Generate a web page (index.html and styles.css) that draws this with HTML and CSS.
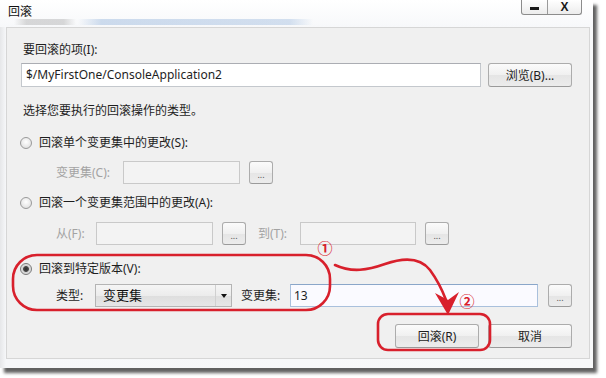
FILE: index.html
```html
<!DOCTYPE html>
<html lang="zh-CN">
<head>
<meta charset="utf-8">
<title>回滚</title>
<link rel="stylesheet" href="styles.css">
</head>
<body>
<div class="shot">
  <div class="titlebar">
    <span class="title">回滚</span>
    <div class="caption">
      <span class="cap cap-min"><i></i></span>
      <span class="cap cap-close">X</span>
    </div>
  </div>
  <div class="panel">
    <div class="lbl">要回滚的项(I):</div>
    <div class="row path-row">
      <div class="tb tb-path">$/MyFirstOne/ConsoleApplication2</div>
      <div class="btn btn-browse">浏览(B)...</div>
    </div>
    <div class="lbl lbl-type">选择您要执行的回滚操作的类型。</div>

    <div class="radio-row rr1"><span class="radio"></span><span>回滚单个变更集中的更改(S):</span></div>
    <div class="sub sub1">
      <span class="sublbl dis w-c">变更集(C):</span>
      <div class="tb tb-dis w-117"></div>
      <div class="btn dots">...</div>
    </div>

    <div class="radio-row rr2"><span class="radio"></span><span>回滚一个变更集范围中的更改(A):</span></div>
    <div class="sub sub2">
      <span class="sublbl dis w-f">从(F):</span>
      <div class="tb tb-dis w-117"></div>
      <div class="btn dots">...</div>
      <span class="sublbl dis w-t">到(T):</span>
      <div class="tb tb-dis w-116"></div>
      <div class="btn dots">...</div>
    </div>

    <div class="radio-row rr3"><span class="radio checked"></span><span>回滚到特定版本(V):</span></div>
    <div class="sub sub3">
      <span class="sublbl w-type">类型:</span>
      <div class="combo"><span class="combo-text">变更集</span><span class="combo-arrow"></span></div>
      <span class="sublbl w-cs">变更集:</span>
      <div class="tb tb-focus w-248">13</div>
      <div class="btn dots">...</div>
    </div>

    <div class="actions">
      <div class="btn btn-act">回滚(R)</div>
      <div class="btn btn-act">取消</div>
    </div>
  </div>

  <svg class="marks" width="606" height="378" viewBox="0 0 606 378">
    <rect x="13" y="255" width="317" height="55" rx="24" ry="24" class="mk"/>
    <rect x="378" y="314" width="112" height="36" rx="10" ry="10" class="mk"/>
    <path d="M335,265 C352,273 368,270 385,264 C402,258 420,257 430,270 C438,281 443,292 446,300" class="mk"/>
    <polygon points="435,293 448,300 459,292 448,315" class="mk-fill"/>
    <text x="325" y="254" class="mk-text">①</text>
    <text x="467" y="307" class="mk-text">②</text>
  </svg>
</div>
</body>
</html>
```

FILE: styles.css
```css
html, body {
  margin: 0;
  padding: 0;
  background: #ffffff;
}

body {
  width: 606px;
  height: 378px;
  overflow: hidden;
  font-family: "Noto Sans", "Noto Sans CJK SC", sans-serif;
  font-size: 12px;
  color: #1e1e1e;
}

.shot {
  position: relative;
  width: 593px;
  height: 368px;
  background: linear-gradient(90deg, #e6e7e9 0, #f6f7f9 6px, #f8f9fa 100%);
  box-shadow: 4px 5px 3px rgba(0, 0, 0, 0.62);
}

.titlebar {
  height: 27px;
  box-sizing: border-box;
  display: flex;
  justify-content: space-between;
  align-items: flex-start;
  padding: 0 11px 0 8px;
  background:
    linear-gradient(90deg, rgba(150,150,150,0) 0, rgba(150,150,150,.35) 20%, rgba(150,150,150,.35) 80%, rgba(150,150,150,0) 100%) no-repeat 14px 19px / 62px 6px,
    linear-gradient(90deg, rgba(120,160,210,0) 0, rgba(120,160,210,.35) 10%, rgba(120,160,210,.3) 90%, rgba(120,160,210,0) 100%) no-repeat 78px 19px / 235px 6px,
    linear-gradient(#ffffff, #f7f8fa);
}

.title {
  line-height: 16px;
  margin-top: 4px;
  color: #111;
}

.caption {
  display: flex;
  height: 15px;
  box-sizing: border-box;
  border: 1px solid #8c8c8c;
  border-top: none;
  border-radius: 0 0 3px 3px;
  background: linear-gradient(#ffffff, #ececec);
}

.cap {
  display: flex;
  align-items: center;
  justify-content: center;
  height: 14px;
}

.cap-min {
  width: 25px;
  border-right: 1px solid #9a9a9a;
}

.cap-min i {
  display: block;
  width: 9px;
  height: 3px;
  margin-top: 2px;
  background: #1a1a1a;
}

.cap-close {
  width: 33px;
  font-family: "Liberation Sans", sans-serif;
  font-weight: bold;
  font-size: 12px;
  line-height: 14px;
  color: #1a1a1a;
}

.panel {
  margin-left: 6px;
  width: 584px;
  height: 332px;
  box-sizing: border-box;
  border: 1px solid #d6d6d6;
  background: #f0f0f0;
  padding: 14px 17px 0 14px;
}

.lbl {
  line-height: 16px;
  margin-left: 2px;
}

.path-row {
  display: flex;
  gap: 7px;
  margin-top: 5px;
}

.tb {
  height: 24px;
  box-sizing: border-box;
  border: 1px solid #c4c8cd;
  border-top-color: #abadb3;
  background: #ffffff;
  line-height: 22px;
  padding-left: 4px;
}

.tb-path {
  width: 460px;
}

.btn {
  box-sizing: border-box;
  border: 1px solid #acacac;
  border-bottom-color: #9a9a9a;
  border-radius: 3px;
  background: linear-gradient(#fbfbfb, #f0f0f0 50%, #e5e5e5 51%, #ececec);
  display: flex;
  align-items: center;
  justify-content: center;
  color: #1e1e1e;
}

.btn-browse {
  width: 84px;
  height: 24px;
}

.lbl-type {
  margin-top: 16px;
}

.radio-row {
  display: flex;
  align-items: center;
  gap: 7px;
  height: 16px;
  line-height: 16px;
  margin-left: -1px;
}

.rr1 { margin-top: 16px; }
.rr2 { margin-top: 11px; }
.rr3 { margin-top: 16px; }

.radio {
  width: 12px;
  height: 12px;
  box-sizing: border-box;
  border-radius: 50%;
  border: 1px solid #9a9a9a;
  background: radial-gradient(circle at 50% 40%, #ffffff 0, #ececec 50%, #d6d6d6 100%);
  flex: none;
}

.radio.checked {
  border-color: #7a7a7a;
  background: radial-gradient(circle, #2c2c2c 0, #4a4a4a 2.5px, #d0d0d0 3.3px, #f4f4f4 100%);
}

.sub {
  display: flex;
  align-items: center;
  margin-left: 35px;
  height: 23px;
}

.sub1 { margin-top: 10px; }
.sub2 { margin-top: 11px; }
.sub3 { margin-top: 7px; }

.sub .tb {
  height: 23px;
  line-height: 21px;
}

.sublbl {
  line-height: 16px;
  flex: none;
}

.dis {
  color: #a3a3a3;
}

.w-c { width: 67px; }
.w-f { width: 40px; }
.w-t { width: 42px; margin-left: 12px; }
.w-type { width: 39px; }
.w-cs { width: 49px; margin-left: 9px; }

.w-116 { width: 116px; }
.w-117 { width: 117px; }
.w-248 { width: 248px; padding-left: 3px; }

.tb-dis {
  border-color: #c9c9c9;
  background: #f3f3f3;
}

.tb-focus {
  border-color: #a9c0dc;
  border-top-color: #8aa6c9;
  background: #fafaff;
}

.dots {
  width: 24px;
  height: 23px;
  margin-left: 9px;
  font-size: 9px;
  line-height: 10px;
  padding-top: 5px;
  color: #555;
}

.sub3 .dots {
  margin-left: 10px;
}

.combo {
  width: 137px;
  height: 23px;
  box-sizing: border-box;
  border: 1px solid #b4b4b4;
  background: linear-gradient(#f5f5f5, #ececec 50%, #dedede 51%, #e6e6e6);
  display: flex;
}

.combo-text {
  flex: 1;
  padding-left: 7px;
  line-height: 21px;
  font-size: 13px;
  color: #111;
}

.combo-arrow {
  width: 15px;
  border-left: 1px solid #d0d0d0;
  display: flex;
  align-items: center;
  justify-content: center;
}

.combo-arrow::after {
  content: "";
  width: 0;
  height: 0;
  border-left: 3.5px solid transparent;
  border-right: 3.5px solid transparent;
  border-top: 4px solid #111;
}

.actions {
  display: flex;
  justify-content: flex-end;
  gap: 9px;
  margin-top: 17px;
}

.btn-act {
  width: 84px;
  height: 24px;
}

.marks {
  position: absolute;
  left: 0;
  top: 0;
  pointer-events: none;
  overflow: visible;
}

.mk {
  fill: none;
  stroke: #d8202c;
  stroke-width: 2.6;
  stroke-linecap: round;
}

.mk-fill {
  fill: #d8202c;
}

.mk-text {
  font-family: "Noto Sans CJK SC", sans-serif;
  font-size: 15px;
  font-weight: bold;
  fill: #d8202c;
  text-anchor: middle;
}
```
